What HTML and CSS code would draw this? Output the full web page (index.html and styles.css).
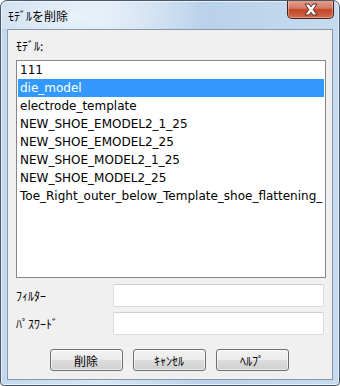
FILE: index.html
```html
<!DOCTYPE html>
<html lang="ja">
<head>
    <meta charset="UTF-8">
    <title>ﾓﾃﾞﾙを削除</title>
    <link rel="stylesheet" href="styles.css">
</head>
<body>
    <div class="window">
        <div class="titlebar">
            <span class="title">ﾓﾃﾞﾙを削除</span>
            <button class="close-btn" type="button" aria-label="閉じる">
                <svg width="18" height="13" viewBox="0 0 18 13">
                    <path d="M3 1 L7 1 L9 3.8 L11 1 L15 1 L11.2 6.5 L15 12 L11 12 L9 9.2 L7 12 L3 12 L6.8 6.5 Z" fill="#ffffff" stroke="#5a2a22" stroke-width="1" stroke-linejoin="round"/>
                </svg>
            </button>
        </div>
        <div class="client">
            <div class="list-label">ﾓﾃﾞﾙ:</div>
            <ul class="listbox">
                <li>111</li>
                <li class="selected">die_model</li>
                <li>electrode_template</li>
                <li>NEW_SHOE_EMODEL2_1_25</li>
                <li>NEW_SHOE_EMODEL2_25</li>
                <li>NEW_SHOE_MODEL2_1_25</li>
                <li>NEW_SHOE_MODEL2_25</li>
                <li>Toe_Right_outer_below_Template_shoe_flattening_</li>
            </ul>
            <div class="field-row">
                <label for="filter">ﾌｨﾙﾀｰ</label>
                <input type="text" id="filter">
            </div>
            <div class="field-row">
                <label for="password">ﾊﾟｽﾜｰﾄﾞ</label>
                <input type="password" id="password">
            </div>
            <div class="buttons">
                <button type="button" class="btn">削除</button>
                <button type="button" class="btn">ｷｬﾝｾﾙ</button>
                <button type="button" class="btn">ﾍﾙﾌﾟ</button>
            </div>
        </div>
    </div>
</body>
</html>
```

FILE: styles.css
```css
html, body {
    margin: 0;
    padding: 0;
    background: #ffffff;
}
body {
    font-family: "DejaVu Sans", "Noto Sans CJK JP", sans-serif;
    font-size: 12px;
    color: #000;
}
.window {
    box-sizing: border-box;
    width: 340px;
    height: 386px;
    border: 1px solid #4a5868;
    border-radius: 7px 7px 4px 4px;
    background: linear-gradient(90deg, #c2d8ee 0%, #d6e6f4 30%, #b9d1ea 60%, #c6dbef 100%);
    box-shadow: inset 0 0 0 1px #e6f0fa;
    display: flex;
    flex-direction: column;
    overflow: hidden;
}
.titlebar {
    height: 28px;
    display: flex;
    align-items: flex-start;
    justify-content: space-between;
    padding-left: 7px;
    background: radial-gradient(ellipse 140px 40px at 70px 14px, rgba(255,255,255,0.55), rgba(255,255,255,0) 100%);
}
.title {
    font-family: "Noto Sans CJK JP", sans-serif;
    font-size: 12px;
    line-height: 14px;
    margin-top: 8px;
    color: #000;
}
.close-btn {
    width: 47px;
    height: 19px;
    margin-right: 5px;
    margin-top: -1px;
    padding: 0;
    border: 1px solid #4c1e18;
    border-top: none;
    border-radius: 0 0 5px 5px;
    background: linear-gradient(180deg, #e8a493 0%, #d37a64 45%, #c3452a 55%, #cf6a4c 100%);
    box-shadow: inset 0 0 0 1px rgba(255,255,255,0.35);
    display: flex;
    align-items: center;
    justify-content: center;
}
.client {
    flex: 1;
    margin: 0 6px 5px 6px;
    border: 1px solid #8797a8;
    background: #f0f0f0;
    padding: 6px 8px 0 8px;
    display: flex;
    flex-direction: column;
}
.list-label {
    font-family: "Noto Sans CJK JP", sans-serif;
    font-size: 12px;
    line-height: 16px;
    margin-top: 2px;
    height: 22px;
}
.listbox {
    box-sizing: border-box;
    list-style: none;
    margin: 0;
    padding: 0 1px;
    height: 218px;
    width: 310px;
    border: 1px solid #828790;
    background: #ffffff;
}
.listbox li {
    height: 18px;
    line-height: 18px;
    padding-left: 2px;
    white-space: nowrap;
    overflow: hidden;
    font-size: 12px;
}
.listbox li.selected {
    background: #3399ff;
    color: #ffffff;
}
.field-row {
    display: flex;
    align-items: center;
    justify-content: space-between;
    margin-top: 6px;
    height: 23px;
}
.field-row + .field-row {
    margin-top: 5px;
}
.field-row label {
    font-family: "Noto Sans CJK JP", sans-serif;
    font-size: 12px;
}
.field-row input {
    box-sizing: border-box;
    width: 211px;
    height: 23px;
    margin: 0;
    border: 1px solid #dadada;
    border-top-color: #cfcfcf;
    border-radius: 2px;
    background: #ffffff;
    outline: none;
}
.buttons {
    display: flex;
    justify-content: center;
    gap: 10px;
    margin-top: 14px;
    padding-right: 2px;
}
.btn {
    box-sizing: border-box;
    width: 73px;
    height: 22px;
    padding: 0;
    border: 1px solid #707070;
    border-radius: 3px;
    background: linear-gradient(180deg, #f2f2f2 0%, #ebebeb 50%, #dddddd 51%, #cfcfcf 100%);
    box-shadow: inset 0 0 0 1px rgba(255,255,255,0.6);
    font-family: "Noto Sans CJK JP", sans-serif;
    font-size: 12px;
    color: #000;
}
```
